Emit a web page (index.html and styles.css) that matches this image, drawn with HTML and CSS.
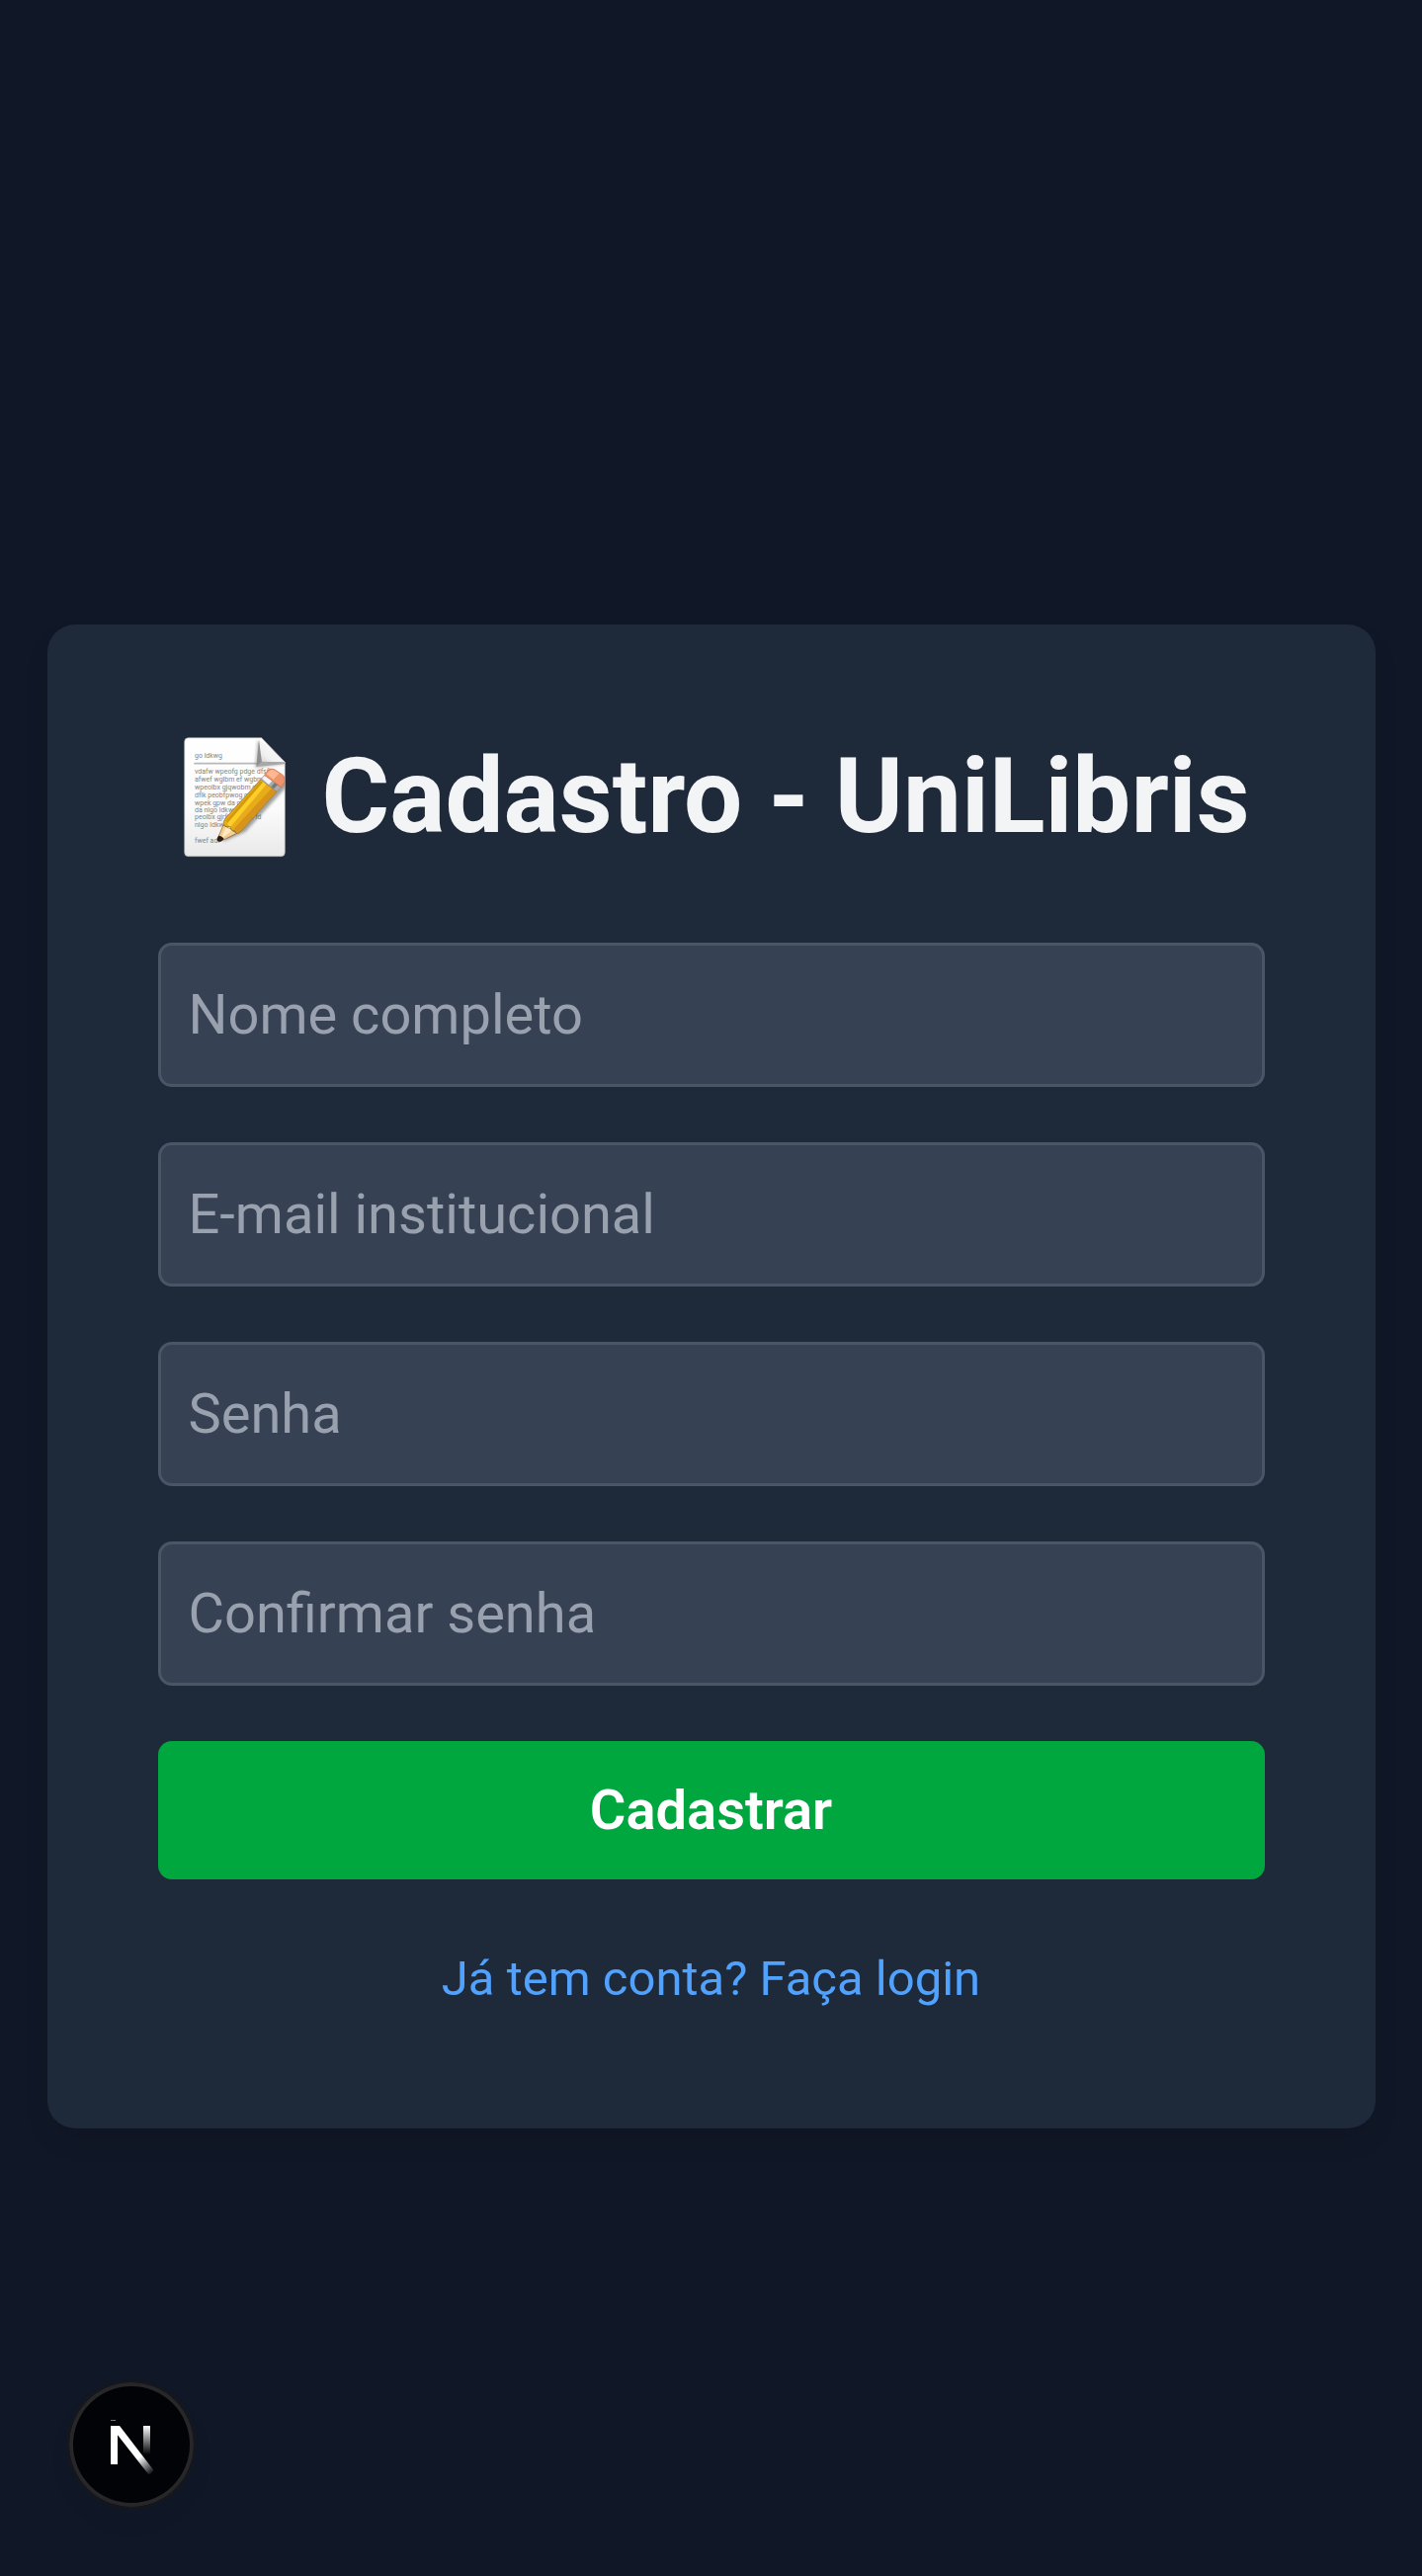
FILE: index.html
```html
<!DOCTYPE html>
<html lang="pt-BR">
<head>
  <meta charset="utf-8">
  <meta name="viewport" content="width=device-width, initial-scale=1">
  <title>Cadastro - UniLibris</title>
  <link rel="stylesheet" href="styles.css">
</head>
<body>
  <main class="page">
    <section class="card">
      <h1 class="title">
        <svg class="memo" viewBox="12 42 375 378" aria-hidden="true">
          <defs>
            <linearGradient id="paper" x1="0" y1="0" x2="0" y2="1">
              <stop offset="0" stop-color="#ffffff"/>
              <stop offset="0.6" stop-color="#fbfbfb"/>
              <stop offset="1" stop-color="#e9e9e9"/>
            </linearGradient>
            <linearGradient id="fold" x1="0" y1="1" x2="1" y2="0">
              <stop offset="0" stop-color="#d0d0d0"/>
              <stop offset="0.3" stop-color="#f1f1f1"/>
              <stop offset="1" stop-color="#ffffff"/>
            </linearGradient>
            <filter id="soft" x="-20%" y="-20%" width="140%" height="140%">
              <feGaussianBlur stdDeviation="5"/>
            </filter>
            <clipPath id="sheet">
              <path d="M62 50H284L355 124V398Q355 410 343 410H62Q50 410 50 398V62Q50 50 62 50Z"/>
            </clipPath>
          </defs>
          <path d="M62 50H284L355 124V398Q355 410 343 410H62Q50 410 50 398V62Q50 50 62 50Z" fill="url(#paper)" stroke="#a9abae" stroke-width="2"/>
          <g class="memo-text">
            <text x="81" y="110">go ldkwg</text>
            <text x="81" y="158">vdafw wpeofg pdge dfsfl</text>
            <text x="81" y="182">afwef wglbm ef wgbmle</text>
            <text x="81" y="206">wpeolbx gjqwobm da</text>
            <text x="81" y="230">dflk peobfpwog cea</text>
            <text x="81" y="254">wpek gpw da ofs</text>
            <text x="81" y="277">da nlgo ldkwg</text>
            <text x="81" y="298">peolbx gjrfhv ofa ld fd</text>
            <text x="81" y="322">nlgo ldkwg</text>
            <text x="81" y="369">fwef adf</text>
          </g>
          <path d="M79 128H270" stroke="#b8b8b8" stroke-width="5"/>
          <g clip-path="url(#sheet)">
            <path d="M271 58L264 142L358 130Z" fill="#6a6a6a" opacity="0.4" filter="url(#soft)"/>
            <path d="M166 366L235 335L368 190L348 166L190 320Z" fill="#555" opacity="0.55" filter="url(#soft)"/>
          </g>
          <path d="M276 56L355 124L285 126Q279 92 276 56Z" fill="url(#fold)"/>
          <path d="M276 56L285 126L268 138Z" fill="#8f8f8f"/>
          <path d="M285 122L355 124V129L268 138Z" fill="#a8a8a8"/>
          <path d="M168 315L151 355Q147 366 160 364L209 340Z" fill="#f3cf94" stroke="#8b5a22" stroke-width="2"/>
          <path d="M176 322L160 358L196 330Z" fill="#ffe9bd"/>
          <path d="M151 352Q145 368 160 365L170 358Q168 350 154 347Z" fill="#2b1c18"/>
          <path d="M168 315Q167 305 174 295L281 177L330 213L225 330Q218 340 209 340Q203 328 197 331Q191 334 190 320Q180 323 168 315Z" fill="#e8ac1a" stroke="#89631a" stroke-width="2"/>
          <path d="M177 299L284 180L299 191L190 320Q181 317 177 299Z" fill="#fbcf28"/>
          <path d="M176 301L281 181L288 185L180 310Z" fill="#d39a0d"/>
          <path d="M197 329L315 203L329 213L225 329Q217 338 209 338Q205 325 197 329Z" fill="#d6951a"/>
          <path d="M281 177L293 163L344 200L330 213Z" fill="#a9abad" stroke="#777" stroke-width="1"/>
          <path d="M285 174L294 165L316 181L306 192Z" fill="#f4f4f4"/>
          <path d="M313 198L324 186L333 193L321 205Z" fill="#77797c"/>
          <path d="M293 163L304 149Q311 141 323 146L346 161Q356 168 354 184L344 200Z" fill="#ef946a" stroke="#c76b49" stroke-width="2"/>
          <path d="M299 160L309 149Q317 145 323 149L337 158L320 177Z" fill="#ffb891"/>
        </svg>
        Cadastro - UniLibris
      </h1>
      <form class="form">
        <input class="field" type="text" name="nome" placeholder="Nome completo" aria-label="Nome completo">
        <input class="field" type="email" name="email" placeholder="E-mail institucional" aria-label="E-mail institucional">
        <input class="field" type="password" name="senha" placeholder="Senha" aria-label="Senha">
        <input class="field" type="password" name="confirmar" placeholder="Confirmar senha" aria-label="Confirmar senha">
        <button class="submit" type="submit">Cadastrar</button>
      </form>
      <p class="login"><a class="login-link" href="/login">Já tem conta? Faça login</a></p>
    </section>
  </main>
  <button class="devtools" type="button" aria-label="Open Next.js Dev Tools">
    <svg class="devtools-logo" viewBox="0 0 126 126" aria-hidden="true">
      <defs>
        <linearGradient id="diagonal" gradientUnits="userSpaceOnUse" x1="71" y1="76" x2="84" y2="93">
          <stop offset="0" stop-color="#fff"/>
          <stop offset="1" stop-color="#fff" stop-opacity="0"/>
        </linearGradient>
        <linearGradient id="bar" gradientUnits="userSpaceOnUse" x1="0" y1="44" x2="0" y2="73">
          <stop offset="0" stop-color="#fff"/>
          <stop offset="1" stop-color="#fff" stop-opacity="0"/>
        </linearGradient>
      </defs>
      <path d="M42 38.500H47" stroke="#777" stroke-width="1"/>
      <path d="M42 44H49V83H42Z" fill="#fff"/>
      <path d="M43 44H51L85.500 89Q84 92 80.500 93.500L48 52Z" fill="url(#diagonal)"/>
      <path d="M75 44H82V73H75Z" fill="url(#bar)"/>
    </svg>
  </button>
</body>
</html>
```
FILE: styles.css
```css
* {
  box-sizing: border-box;
}

body {
  margin: 0;
  background: #101726;
  color: #f3f4f6;
  font-family: Roboto, "Liberation Sans", sans-serif;
  font-size: 56px;
  line-height: 84px;
}

.page {
  display: flex;
  align-items: center;
  justify-content: center;
  min-height: 100vh;
  padding: 179px 47px 0;
}

.card {
  width: 100%;
  max-width: 1344px;
  padding: 112px;
  border-radius: 28px;
  background: #1e2939;
  box-shadow: 0 14px 28px -4px rgba(0, 0, 0, 0.1);
}

.title {
  margin: 0 0 84px;
  font-size: 105px;
  font-weight: 700;
  line-height: 126px;
  text-align: center;
  white-space: nowrap;
}

.memo {
  width: 125px;
  height: 126px;
  vertical-align: top;
}

.memo-text {
  fill: #858585;
  font-size: 21px;
  font-weight: 400;
}

.form {
  display: flex;
  flex-direction: column;
  gap: 56px;
}

.field {
  width: 100%;
  height: 146px;
  padding: 28px;
  border: 3px solid #4a5565;
  border-radius: 14px;
  background: #364153;
  color: #f3f4f6;
  font: inherit;
}

.field::placeholder {
  color: #99a1af;
  opacity: 1;
}

.submit {
  padding: 28px;
  border: 0;
  border-radius: 14px;
  background: #00a63e;
  color: #fff;
  font: inherit;
  font-weight: 600;
  cursor: pointer;
}

.login {
  margin: 56px 0 0;
  text-align: center;
}

.login-link {
  color: #51a2ff;
  font-size: 49px;
  line-height: 70px;
  text-decoration: none;
}

.devtools {
  position: fixed;
  bottom: 70px;
  left: 70px;
  width: 126px;
  height: 126px;
  padding: 0;
  border: 0;
  border-radius: 50%;
  background: #020306;
  box-shadow: inset 0 0 0 4px #27272a, 0 0 0 3px #14171e, 0 14px 28px rgba(0, 0, 0, 0.04);
  cursor: pointer;
}

.devtools-logo {
  display: block;
  width: 100%;
  height: 100%;
}
```
